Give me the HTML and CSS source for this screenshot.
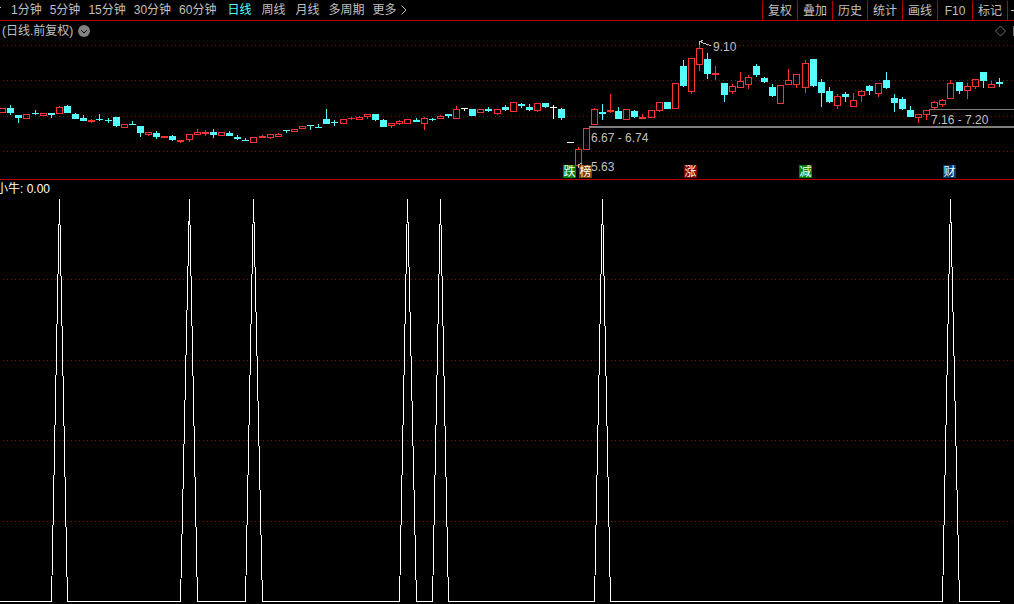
FILE: index.html
```html
<!DOCTYPE html>
<html lang="zh-CN">
  <head>
    <meta charset="UTF-8" />
    <meta name="viewport" content="width=device-width, initial-scale=1.0" />
    <title>日线</title>
    <link rel="stylesheet" href="styles.css">
  </head>
  <body>
    <header class="toolbar">
      <nav class="periods">
        <span class="more-left"></span>
        <div class="minutes">
          <a href="#">1分钟</a>
          <a href="#">5分钟</a>
          <a href="#">15分钟</a>
          <a href="#">30分钟</a>
          <a href="#">60分钟</a>
        </div>
        <div class="days">
          <a href="#" class="active">日线</a>
          <a href="#">周线</a>
          <a href="#">月线</a>
        </div>
        <div class="others">
          <a href="#">多周期</a>
          <a href="#">更多<svg class="arrow" width="6" height="10"><path d="M0.5 0.5L5 5L0.5 9.5" /></svg></a>
        </div>
      </nav>
      <div class="tools">
        <button type="button">复权</button>
        <button type="button">叠加</button>
        <button type="button">历史</button>
        <button type="button">统计</button>
        <button type="button">画线</button>
        <button type="button">F10</button>
        <button type="button">标记</button>
        <button type="button" class="last" aria-label="加自选">
          <svg width="7" height="7"><path d="M3.5 0V7M0 3.5H7" /></svg>
        </button>
      </div>
    </header>

    <section class="panel">
      <div class="caption">
        <span>(日线.前复权)</span>
        <button type="button" class="round" aria-label="展开">
          <svg width="12" height="12">
            <circle cx="6" cy="6" r="6" />
            <path d="M3 5L6 8L9 5" />
          </svg>
        </button>
        <svg class="corner" width="20" height="12">
          <path d="M6.5 1L11.5 6L6.5 11L1.5 6Z" />
          <path d="M19.5 1V11" />
        </svg>
      </div>
      <svg class="chart" id="kline"></svg>
    </section>

    <section class="panel">
      <div class="caption indicator">小牛: 0.00</div>
      <svg class="chart" id="signal"></svg>
    </section>

    <script src="chart.js"></script>
  </body>
</html>
```
FILE: styles.css
```css
* {
  box-sizing: border-box;
}

body {
  margin: 0;
  background-color: #000;
  color: #c0c0c0;
  font-family: "Liberation Sans", "Noto Sans CJK SC", sans-serif;
  font-size: 12px;
  line-height: 20px;
  overflow: hidden;
}

a {
  color: inherit;
  text-decoration: none;
}

button {
  padding: 0;
  border: none;
  background: none;
  color: inherit;
  font: inherit;
  cursor: pointer;
}

svg {
  display: block;
  fill: none;
  stroke: #c0c0c0;
}

.toolbar {
  display: flex;
  justify-content: space-between;
  height: 21px;
  border-bottom: 1px solid #b80000;
  white-space: nowrap;
}

.periods,
.minutes,
.days,
.others {
  display: flex;
}

.more-left {
  width: 1px;
  height: 1px;
  margin: 7px 10px 0 0;
  background-color: #c0c0c0;
}

.minutes {
  gap: 8px;
  margin-right: 11px;
}

.days {
  gap: 10px;
  margin-right: 9px;
}

.others {
  gap: 8px;
}

.others a {
  display: flex;
  align-items: center;
}

.arrow {
  margin-left: 4px;
}

.active {
  color: #54ffff;
}

.tools {
  display: flex;
  padding-top: 1px;
}

.tools button {
  width: 35px;
  height: 19px;
  border-left: 1px solid #b80000;
  line-height: 18px;
}

.tools .last {
  width: 7px;
  padding-left: 3px;
  overflow: hidden;
}

.panel {
  position: relative;
}

.panel + .panel {
  border-top: 1px solid #b80000;
}

.caption {
  display: flex;
  align-items: center;
  gap: 5px;
  height: 19px;
  padding-left: 2px;
}

.indicator {
  margin-left: -6px;
  height: 18px;
  color: #fff;
}

.round circle {
  fill: #808080;
  stroke: none;
}

.round path {
  stroke: #000;
}

.corner {
  margin-left: auto;
  stroke: #707070;
}

.chart {
  width: 100%;
  shape-rendering: crispEdges;
}

#kline {
  height: 139px;
}

#signal {
  height: 406px;
}

.grid {
  stroke: #a00000;
  stroke-dasharray: 1 3;
}

.up {
  stroke: #ff3232;
}

.down {
  stroke: #54ffff;
}

.down rect {
  fill: #54ffff;
}

.flat {
  stroke: #fff;
}

.gap {
  stroke: #808080;
}

.pointer {
  stroke: #c0c0c0;
}

.price {
  fill: #c0c0c0;
  stroke: none;
}

.mark text {
  fill: #fff;
  stroke: none;
  text-anchor: middle;
}

.mark rect {
  stroke: none;
}

.green {
  fill: #008000;
}

.brown {
  fill: #804000;
}

.red {
  fill: #800000;
}

.blue {
  fill: #003c70;
}

.line {
  stroke: #fff;
}
```
FILE: chart.js
```js
// type, x, body top, body bottom, high, low
var candles = [
  ["up", 2, 108, 113], ["down", 10, 108, 113, 105, 115], ["down", 18, 115, 118, 115, 123],
  ["up", 26, 114, 119], ["down", 35, 113, 114, 110, 115], ["up", 43, 113, 116],
  ["down", 51, 113, 115, 113, 118], ["up", 59, 107, 114, 106, 114], ["down", 67, 106, 113, 105, 113],
  ["down", 75, 114, 119, 113, 119], ["down", 83, 118, 121, 115, 121], ["up", 91, 120, 122, 119, 123],
  ["down", 99, 119, 120, 114, 121], ["down", 108, 120, 121, 118, 123], ["down", 116, 117, 126, 117, 127],
  ["up", 124, 124, 128], ["down", 132, 124, 125, 121, 125], ["down", 140, 126, 133, 126, 137],
  ["up", 148, 132, 135, 132, 136], ["down", 156, 133, 137, 131, 139], ["up", 164, 136, 138],
  ["down", 172, 136, 140, 135, 141], ["up", 180, 140, 142, 140, 143], ["up", 189, 134, 140, 134, 142],
  ["up", 197, 132, 135, 129, 135], ["up", 205, 132, 134, 130, 136], ["down", 213, 132, 135, 129, 138],
  ["up", 221, 132, 136], ["down", 229, 133, 136, 131, 136], ["down", 237, 137, 139, 135, 140],
  ["down", 245, 140, 141, 138, 141], ["up", 253, 137, 143], ["up", 262, 136, 138, 135, 138],
  ["up", 270, 134, 138, 134, 139], ["up", 278, 134, 137, 133, 137], ["down", 286, 130, 131, 130, 133],
  ["up", 294, 129, 132], ["up", 302, 126, 129], ["down", 310, 125, 126, 125, 130],
  ["down", 318, 127, 128, 124, 128], ["down", 326, 119, 124, 109, 124], ["down", 334, 122, 123, 120, 126],
  ["up", 343, 119, 124], ["up", 351, 118, 119, 117, 120], ["up", 359, 117, 120, 116, 120],
  ["up", 367, 114, 117, 114, 119], ["down", 375, 114, 120, 114, 121], ["down", 383, 120, 127, 119, 127],
  ["up", 391, 123, 126, 123, 128], ["up", 399, 121, 124, 120, 125], ["up", 407, 119, 124],
  ["down", 416, 120, 122, 118, 122], ["up", 424, 118, 124, 117, 130], ["down", 432, 119, 120, 118, 121],
  ["up", 440, 116, 119, 115, 119], ["down", 448, 114, 116, 114, 118], ["up", 456, 109, 119, 106, 119],
  ["flat", 464, 108, 109, 108, 111], ["down", 472, 109, 116], ["up", 480, 109, 113],
  ["down", 488, 109, 111, 107, 112], ["up", 497, 109, 114, 109, 115], ["down", 505, 107, 110, 105, 111],
  ["up", 513, 102, 112], ["down", 521, 104, 106, 103, 108], ["down", 529, 107, 110, 104, 111],
  ["up", 537, 103, 111, 103, 112], ["down", 545, 103, 107, 103, 108], ["flat", 553, 107, 108, 105, 119],
  ["down", 561, 109, 118, 108, 120], ["flat", 570, 142, 143], ["up", 578, 149, 166, 147, 166],
  ["up", 586, 128, 150], ["up", 594, 109, 125, 108, 125], ["down", 602, 112, 114, 104, 120],
  ["up", 610, 110, 112, 94, 113], ["down", 618, 111, 119, 107, 119], ["up", 626, 109, 120],
  ["down", 634, 111, 117, 110, 118], ["up", 642, 117, 119, 114, 119], ["up", 651, 110, 118],
  ["up", 659, 102, 111, 102, 112], ["down", 667, 102, 109], ["up", 675, 83, 109],
  ["down", 683, 66, 86, 60, 87], ["up", 691, 58, 92, 58, 94], ["up", 699, 48, 65, 42, 71],
  ["down", 707, 59, 74, 53, 79], ["up", 715, 73, 75, 66, 80], ["down", 724, 83, 95, 83, 102],
  ["up", 732, 86, 92, 84, 94], ["up", 740, 81, 88, 72, 88], ["up", 748, 77, 85, 75, 89],
  ["down", 756, 66, 75, 64, 77], ["down", 764, 78, 82, 77, 83], ["down", 772, 87, 96, 84, 97],
  ["up", 780, 85, 104], ["up", 788, 80, 85, 69, 85], ["up", 796, 74, 85, 74, 88],
  ["up", 805, 63, 88, 60, 93], ["down", 813, 59, 86, 59, 87], ["down", 821, 82, 93, 79, 107],
  ["down", 829, 91, 102, 87, 103], ["up", 837, 96, 106, 94, 109], ["down", 845, 94, 97, 92, 102],
  ["up", 853, 100, 107, 93, 107], ["up", 861, 91, 96, 90, 102], ["down", 869, 86, 91, 85, 95],
  ["up", 878, 83, 94, 83, 97], ["down", 886, 80, 88, 72, 89], ["down", 894, 98, 103, 94, 112],
  ["down", 902, 99, 109, 97, 110], ["down", 910, 110, 117, 106, 117], ["up", 918, 114, 118, 114, 123],
  ["up", 926, 110, 115, 110, 120], ["up", 934, 102, 108, 101, 109], ["up", 942, 100, 105, 99, 107],
  ["up", 950, 83, 99, 80, 99], ["down", 959, 82, 91, 82, 94], ["up", 967, 86, 91, 83, 99],
  ["up", 975, 79, 87, 79, 89], ["down", 983, 72, 81, 72, 88], ["up", 991, 84, 88, 81, 88],
  ["down", 999, 82, 84, 78, 87]
];

// days on which the indicator fires
var signals = [59, 189, 253, 407, 440, 602, 950];

var marks = [
  ["跌", 563, "green"],
  ["榜", 579, "brown"],
  ["涨", 684, "red"],
  ["减", 799, "green"],
  ["财", 943, "blue"]
];

var prices = [
  ["9.10", 713, 51],
  ["6.67 - 6.74", 591, 142],
  ["5.63", 591, 171],
  ["7.16 - 7.20", 931, 124]
];

function line(x1, y1, x2, y2, cls) {
  return '<line class="' + cls + '" x1="' + x1 + '" y1="' + y1 + '" x2="' + x2 + '" y2="' + y2 + '"/>';
}

function grid(rows) {
  return rows.map(function (y) {
    return line(3, y + 0.5, "100%", y + 0.5, "grid");
  }).join("");
}

function drawKline() {
  var top = 40;
  var out = grid([45, 80, 116, 151]);

  candles.forEach(function (c) {
    var x = c[1] + 0.5;
    var high = c[4] || c[2];
    var low = c[5] || c[3];
    out += '<g class="' + c[0] + '">';
    if (high < c[2]) out += line(x, high, x, c[2], "wick");
    if (low > c[3]) out += line(x, c[3], x, low, "wick");
    if (c[3] - c[2] == 1) {
      out += line(x - 3.5, c[2] + 0.5, x + 3.5, c[2] + 0.5, "body");
    } else {
      out += '<rect x="' + (x - 3) + '" y="' + (c[2] + 0.5) + '" width="6" height="' + (c[3] - c[2] - 1) + '"/>';
    }
    out += "</g>";
  });

  out += '<line class="gap" x1="589" y1="127" x2="100%" y2="127" stroke-width="2"/>';
  out += line(929, 109.5, "100%", 109.5, "gap");
  out += '<path class="pointer" d="M699.5 45V41.5L703.5 40.5M700 41.5L704 43.5L711 45.5"/>';
  out += '<path class="pointer" d="M578.5 168V164.5L582 163.5M579 164.5L590 168.5"/>';

  prices.forEach(function (p) {
    out += '<text class="price" x="' + p[1] + '" y="' + p[2] + '">' + p[0] + "</text>";
  });
  marks.forEach(function (m) {
    out += '<g class="mark"><rect class="' + m[2] + '" x="' + m[1] + '" y="165" width="13" height="13"/>';
    out += '<text x="' + (m[1] + 6.5) + '" y="176">' + m[0] + "</text></g>";
  });

  document.getElementById("kline").innerHTML =
    '<g transform="translate(0,-' + top + ')">' + out + "</g>";
}

function drawSignal() {
  var top = 198;
  var base = 601.5;
  var points = ["0," + base];

  candles.forEach(function (c) {
    var y = signals.indexOf(c[1]) >= 0 ? 199 : base;
    points.push(c[1] + 0.5 + "," + y);
  });

  document.getElementById("signal").innerHTML =
    '<g transform="translate(0,-' + top + ')">' +
    grid([279, 360, 440, 521]) +
    '<polyline class="line" stroke-linejoin="bevel" points="' + points.join(" ") + '"/></g>';
}

drawKline();
drawSignal();
```
